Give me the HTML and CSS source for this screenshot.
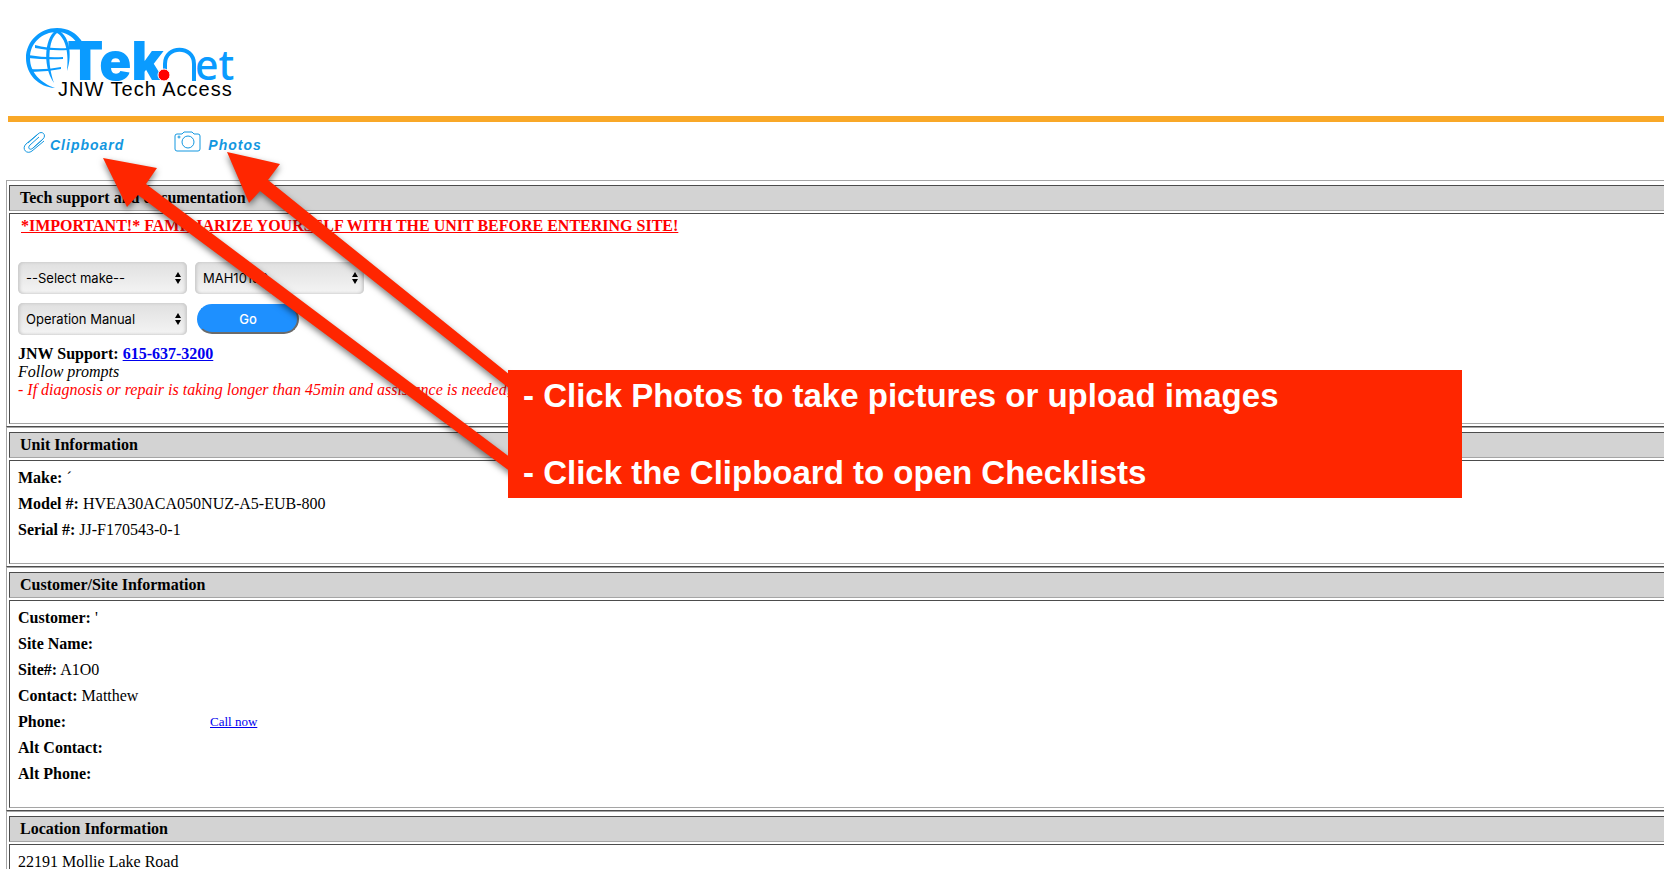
FILE: index.html
```html
<!DOCTYPE html>
<html lang="en">
<head>
    <meta charset="UTF-8">
    <meta name="viewport" content="width=device-width, initial-scale=1.0">
    <title>TekNet - JNW Tech Access</title>
    <link rel="stylesheet" href="styles.css">
</head>
<body>
    <header>
        <svg class="logo" width="240" height="108" viewBox="0 0 240 108" role="img" aria-label="TekNet JNW Tech Access">
            <g fill="#0a9bff">
                <path d="M83 43 C77 33 68 28 57 28 C40 28 26 41 26 58 C26 74 38 87 55 88 C41 83 30 73 30 58 C30 43 42 32 57 32 C66 32 72 36 77 43 Z"/>
                <path d="M57 30 C46 34 41 64 54 83 C47 64 48 40 57 33 C66 38 69 54 67 71 C73 54 69 34 57 30 Z"/>
                <path d="M35 45 Q50 49 68 48 V50 Q50 51 35 48 Z"/>
                <path d="M28 55 Q46 58 63 57 V59 Q46 60 28 58 Z"/>
                <path d="M30 69 Q46 70 61 67 V69 Q46 72 31 72 Z"/>
            </g>
            <text class="logo-tek" x="67" y="80">Tek</text>
            <path d="M165 72 V64 C165 45 194 45 194 64 V81" fill="none" stroke="#0a9bff" stroke-width="4"/>
            <text class="logo-et" x="195" y="80">et</text>
            <circle cx="164" cy="75" r="6" fill="#ff0000" stroke="#fff"/>
            <text class="logo-sub" x="58" y="96">JNW Tech Access</text>
        </svg>
    </header>
    <hr>

    <nav>
        <a href="#clipboard" class="nav-clipboard">
            <svg width="24" height="24" viewBox="0 0 24 24" fill="none" stroke="#1397e0" stroke-width="1">
                <path d="M16 6 L7 14 C4 17 7 20 10 17 L20 8 C24 4 19 -1 15 3 L3 13 C-2 18 4 24 9 20 L21 10"/>
                <path d="M14 4 L5 12 M19 9 L10 17"/>
            </svg>
            <span>Clipboard</span>
        </a>
        <a href="#photos" class="nav-photos">
            <svg width="28" height="24" viewBox="0 0 28 24" fill="none" stroke="#1397e0" stroke-width="1">
                <path d="M3 3 H8 L10 1 H18 L20 3 H24 Q26 3 26 5 V18 Q26 20 24 20 H3 Q1 20 1 18 V5 Q1 3 3 3 Z"/>
                <circle cx="14" cy="11" r="6"/>
                <circle cx="5" cy="6" r="1"/>
            </svg>
            <span>Photos</span>
        </a>
    </nav>

    <main>
        <section class="panel">
            <h2>Tech support and documentation</h2>
            <div class="panel-body support">
                <p class="important">*IMPORTANT!* FAMILIARIZE YOURSELF WITH THE UNIT BEFORE ENTERING SITE!</p>
                <form>
                    <div class="form-row">
                        <span class="select-box">
                            <select aria-label="Make">
                                <option>--Select make--</option>
                            </select>
                        </span>
                        <span class="select-box">
                            <select aria-label="Model">
                                <option>MAH10182</option>
                            </select>
                        </span>
                    </div>
                    <div class="form-row">
                        <span class="select-box">
                            <select aria-label="Document">
                                <option>Operation Manual</option>
                            </select>
                        </span>
                        <button type="button">Go</button>
                    </div>
                </form>
                <p><b>JNW Support: <a href="tel:6156373200">615-637-3200</a></b></p>
                <p><i>Follow prompts</i></p>
                <p class="warning"><i>- If diagnosis or repair is taking longer than 45min and assistance is needed,</i></p>
            </div>
        </section>

        <section class="panel">
            <h2>Unit Information</h2>
            <div class="panel-body fields">
                <p><b>Make:</b> ´</p>
                <p><b>Model #:</b> HVEA30ACA050NUZ-A5-EUB-800</p>
                <p><b>Serial #:</b> JJ-F170543-0-1</p>
            </div>
        </section>

        <section class="panel">
            <h2>Customer/Site Information</h2>
            <div class="panel-body fields">
                <p><b>Customer:</b> '</p>
                <p><b>Site Name:</b></p>
                <p><b>Site#:</b> A1O0</p>
                <p><b>Contact:</b> Matthew</p>
                <p class="phone"><b>Phone:</b> <a href="#call">Call now</a></p>
                <p><b>Alt Contact:</b></p>
                <p><b>Alt Phone:</b></p>
            </div>
        </section>

        <section class="panel">
            <h2>Location Information</h2>
            <div class="panel-body fields">
                <p>22191 Mollie Lake Road</p>
            </div>
        </section>
    </main>

    <!-- help callout with arrows to the two menu links -->
    <svg class="arrows" width="520" height="480" viewBox="0 0 520 480" fill="#ff2600">
        <path d="M103 158 L157 168 L146 184 L515 461 V475 L138 195 L127 207 Z"/>
        <path d="M227 152 L280 164 L268 180 L515 379 V393 L260 191 L249 203 Z"/>
    </svg>
    <div class="callout">
        <p>- Click Photos to take pictures or upload images</p>
        <p>- Click the Clipboard to open Checklists</p>
    </div>
</body>
</html>
```
FILE: styles.css
```css
body {
    font-family: "Liberation Serif", "Times New Roman", serif;
    font-size: 16px;
    line-height: 18px;
    margin: 0;
    color: #000;
    background-color: #fff;
    position: relative;
    overflow-x: hidden;
}

/* page scrolls without a visible bar */
html {
    scrollbar-width: none;
}

h2, p {
    margin: 0;
}

a {
    color: #0000ee;
}

header {
    height: 116px;
}

.logo {
    display: block;
}

.logo-tek {
    font-family: Inter, sans-serif;
    font-weight: 900;
    font-size: 53px;
    fill: #0a9bff;
}

.logo-et {
    font-family: "Noto Sans", sans-serif;
    font-weight: 500;
    font-size: 41px;
    fill: #0a9bff;
}

.logo-sub {
    font-family: "Liberation Sans", Arial, sans-serif;
    font-size: 20px;
    letter-spacing: 1px;
}

hr {
    height: 6px;
    margin: 0 0 0 8px;
    border: none;
    background-color: #f9a828;
}

nav {
    display: flex;
    align-items: center;
    gap: 50px;
    height: 42px;
    padding: 0 23px;
    margin-bottom: 16px;
}

nav a {
    display: flex;
    align-items: center;
    color: #1397e0;
    font: italic bold 14px "Liberation Sans", Arial, sans-serif;
    letter-spacing: 1px;
    text-decoration: none;
}

nav span {
    padding-top: 4px;
}

.nav-clipboard {
    gap: 3px;
}

.nav-photos {
    gap: 6px;
}

/* panels run past the right edge of the window */
.panel {
    margin: 0 -8px 0 6px;
    padding: 4px 2px 2px;
    border: 1px solid;
    border-color: #a5a5a5 #4c4c4c #4c4c4c #a5a5a5;
}

.panel h2 {
    height: 24px;
    margin-bottom: 2px;
    padding-left: 10px;
    border: 1px solid;
    border-color: #4c4c4c #a5a5a5 #a5a5a5 #4c4c4c;
    background-color: #d3d3d3;
    font-size: 16px;
    line-height: 24px;
}

.panel-body {
    padding: 4px 8px 20px;
    border: 1px solid;
    border-color: #4c4c4c #a5a5a5 #a5a5a5 #4c4c4c;
}

.support {
    padding-top: 3px;
    padding-bottom: 24px;
}

.important {
    padding-left: 3px;
    color: #ff0000;
    font-weight: bold;
    text-decoration: underline;
}

.warning {
    color: #ff0000;
}

form {
    padding: 27px 0 1px;
}

.form-row {
    display: flex;
    align-items: center;
    gap: 8px;
    margin-bottom: 9px;
}

.select-box {
    position: relative;
    width: 169px;
    height: 32px;
}

.select-box::before,
.select-box::after {
    content: "";
    position: absolute;
    right: 6px;
    border: 3px solid transparent;
}

.select-box::before {
    top: 7px;
    border-bottom: 5px solid #000;
}

.select-box::after {
    bottom: 7px;
    border-top: 5px solid #000;
}

select {
    appearance: none;
    width: 100%;
    height: 100%;
    padding: 0 8px;
    border: none;
    border-radius: 5px;
    background: linear-gradient(#e0e0e0, #f4f4f4);
    box-shadow: inset 2px 0 3px #ccc, inset -2px 0 3px #ccc;
    color: #000;
    font: 13px Inter, sans-serif;
}

button {
    width: 102px;
    height: 30px;
    margin-left: 2px;
    border: 2px solid;
    border-color: #1e90ff #6b6b6b #6b6b6b #1e90ff;
    border-radius: 15px;
    background-color: #1e90ff;
    color: #fff;
    font: 500 13px Inter, sans-serif;
}

.fields {
    line-height: 26px;
}

.phone {
    display: flex;
}

.phone a {
    margin-left: 144px;
    font-size: 13px;
}

.arrows {
    position: absolute;
    top: 0;
    left: 0;
    filter: drop-shadow(0 3px 3px rgba(0, 0, 0, 0.5));
}

.callout {
    position: absolute;
    top: 370px;
    left: 508px;
    box-sizing: border-box;
    width: 954px;
    padding: 7px 15px;
    background-color: #ff2600;
    color: #fff;
    font: bold 33px/37px "Liberation Sans", Arial, sans-serif;
}

.callout p + p {
    margin-top: 40px;
}
```
